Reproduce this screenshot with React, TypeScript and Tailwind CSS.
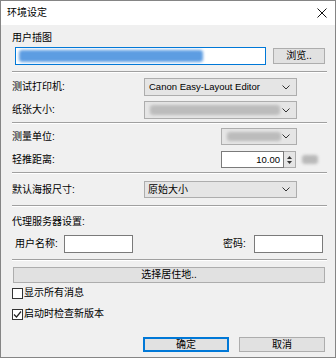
import React from "react";

const Chevron = () => (
  <svg width="8" height="5" viewBox="0 0 8 5" className="shrink-0">
    <path d="M0.5 0.5 L4 4 L7.5 0.5" fill="none" stroke="#333" strokeWidth="1" />
  </svg>
);

const Separator = ({ mt }: { mt: string }) => (
  <div className={`${mt} h-[2px] border-t border-[#a0a0a0] border-b border-b-white`} />
);

interface SelectProps {
  width: string;
  children?: React.ReactNode;
}

const Select = ({ width, children }: SelectProps) => (
  <div
    className={`${width} h-full flex items-center border border-[#adadad] bg-[#e5e5e5] pl-[3px] pr-[6px]`}
  >
    <div className="flex-1 h-full flex items-center overflow-hidden">{children}</div>
    <Chevron />
  </div>
);

const Blur = ({ className }: { className: string }) => (
  <div className={`${className} blur-[1.5px] rounded-[3px]`} />
);

const Checkbox = ({ checked }: { checked?: boolean }) => (
  <div className="w-[11px] h-[11px] border border-[#333] bg-white flex items-center justify-center shrink-0">
    {checked && (
      <svg width="9" height="9" viewBox="0 0 9 9">
        <path d="M1 4.5 L3.5 7 L8 1.5" fill="none" stroke="#222" strokeWidth="1.2" />
      </svg>
    )}
  </div>
);

const Button = ({
  width,
  children,
  primary,
  className = "",
}: {
  width: string;
  children: React.ReactNode;
  primary?: boolean;
  className?: string;
}) => (
  <div
    className={`${width} ${className} h-full flex items-center justify-center bg-[#e1e1e1] border ${
      primary ? "border-[#0078d7] ring-1 ring-inset ring-[#0078d7]" : "border-[#adadad]"
    }`}
  >
    {children}
  </div>
);

export default function App() {
  return (
    <div className="w-[336px] h-[358px] border border-[#858585] bg-[#f0f0f0] flex flex-col overflow-hidden text-black text-[10px] leading-[16px] font-['Liberation_Sans','Noto_Sans_CJK_SC',sans-serif]">
      {/* title bar */}
      <div className="h-[24px] bg-white flex items-center justify-between pl-[6px] pr-[8px] shrink-0">
        <span>环境设定</span>
        <svg width="10" height="10" viewBox="0 0 10 10">
          <path d="M0.5 0.5 L9.5 9.5 M9.5 0.5 L0.5 9.5" stroke="#111" strokeWidth="1" />
        </svg>
      </div>

      <div className="flex flex-col pl-[11px] pr-[8px]">
        <div className="mt-[5px] h-[16px]">用户插图</div>
        <div className="mt-[1px] h-[18px] flex items-center">
          <div className="ml-[3px] w-[251px] h-[18px] border border-[#0078d7] bg-white flex items-center pl-[3px]">
            <Blur className="w-[184px] h-[12px] bg-[#5d9de2]" />
          </div>
          <div className="ml-[7px] h-[16px]">
            <Button width="w-[52px]">浏览..</Button>
          </div>
        </div>

        <Separator mt="mt-[6px]" />

        <div className="mt-[5px] h-[18px] flex items-center">
          <div className="w-[132px]">测试打印机:</div>
          <Select width="w-[153px]">
            <span className="text-[9.5px] pl-[1px]">Canon Easy-Layout Editor</span>
          </Select>
        </div>
        <div className="mt-[5px] h-[18px] flex items-center">
          <div className="w-[132px]">纸张大小:</div>
          <Select width="w-[153px]">
            <Blur className="ml-[2px] w-[130px] h-[10px] bg-[#bcbcbc]" />
          </Select>
        </div>

        <Separator mt="mt-[3px]" />

        <div className="mt-[4px] h-[17px] flex items-center">
          <div className="w-[209px]">测量单位:</div>
          <Select width="w-[76px]">
            <Blur className="ml-[2px] w-[54px] h-[9px] bg-[#bcbcbc]" />
          </Select>
        </div>
        <div className="mt-[6px] h-[17px] flex items-center">
          <div className="w-[209px]">轻推距离:</div>
          <div className="w-[63px] h-full border border-[#7a7a7a] bg-white flex items-center justify-end pr-[3px] text-[9.5px]">
            10.00
          </div>
          <div className="w-[12px] h-full border border-l-0 border-[#adadad] bg-[#e5e5e5] flex flex-col items-center justify-center gap-[2px]">
            <svg width="5" height="3" viewBox="0 0 5 3">
              <path d="M0 3 L2.5 0 L5 3 Z" fill="#333" />
            </svg>
            <svg width="5" height="3" viewBox="0 0 5 3">
              <path d="M0 0 L2.5 3 L5 0 Z" fill="#333" />
            </svg>
          </div>
          <Blur className="ml-[6px] w-[16px] h-[9px] bg-[#b9b9b9]" />
        </div>

        <Separator mt="mt-[4px]" />

        <div className="mt-[7px] h-[17px] flex items-center">
          <div className="w-[132px]">默认海报尺寸:</div>
          <Select width="w-[153px]">原始大小</Select>
        </div>

        <Separator mt="mt-[7px]" />

        <div className="mt-[7px] h-[16px]">代理服务器设置:</div>
        <div className="mt-[5px] h-[18px] flex items-center">
          <div className="w-[52px] pl-[3px]">用户名称:</div>
          <div className="w-[69px] h-full border border-[#7a7a7a] bg-white" />
          <div className="ml-[90px] w-[31px]">密码:</div>
          <div className="w-[69px] h-full border border-[#7a7a7a] bg-white" />
        </div>

        <Separator mt="mt-[6px]" />

        <div className="mt-[6px] h-[16px] flex">
          <Button width="w-[312px]" className="ml-[1px]">
            选择居住地..
          </Button>
        </div>

        <div className="mt-[2px] h-[16px] flex items-center gap-[1px]">
          <Checkbox />
          <span>显示所有消息</span>
        </div>
        <div className="mt-[5px] h-[16px] flex items-center gap-[1px]">
          <Checkbox checked />
          <span>启动时检查新版本</span>
        </div>

        <div className="mt-[15px] h-[15px] flex justify-end gap-[10px] pr-[2px]">
          <Button width="w-[86px]" primary>
            确定
          </Button>
          <Button width="w-[86px]">取消</Button>
        </div>
      </div>
    </div>
  );
}
